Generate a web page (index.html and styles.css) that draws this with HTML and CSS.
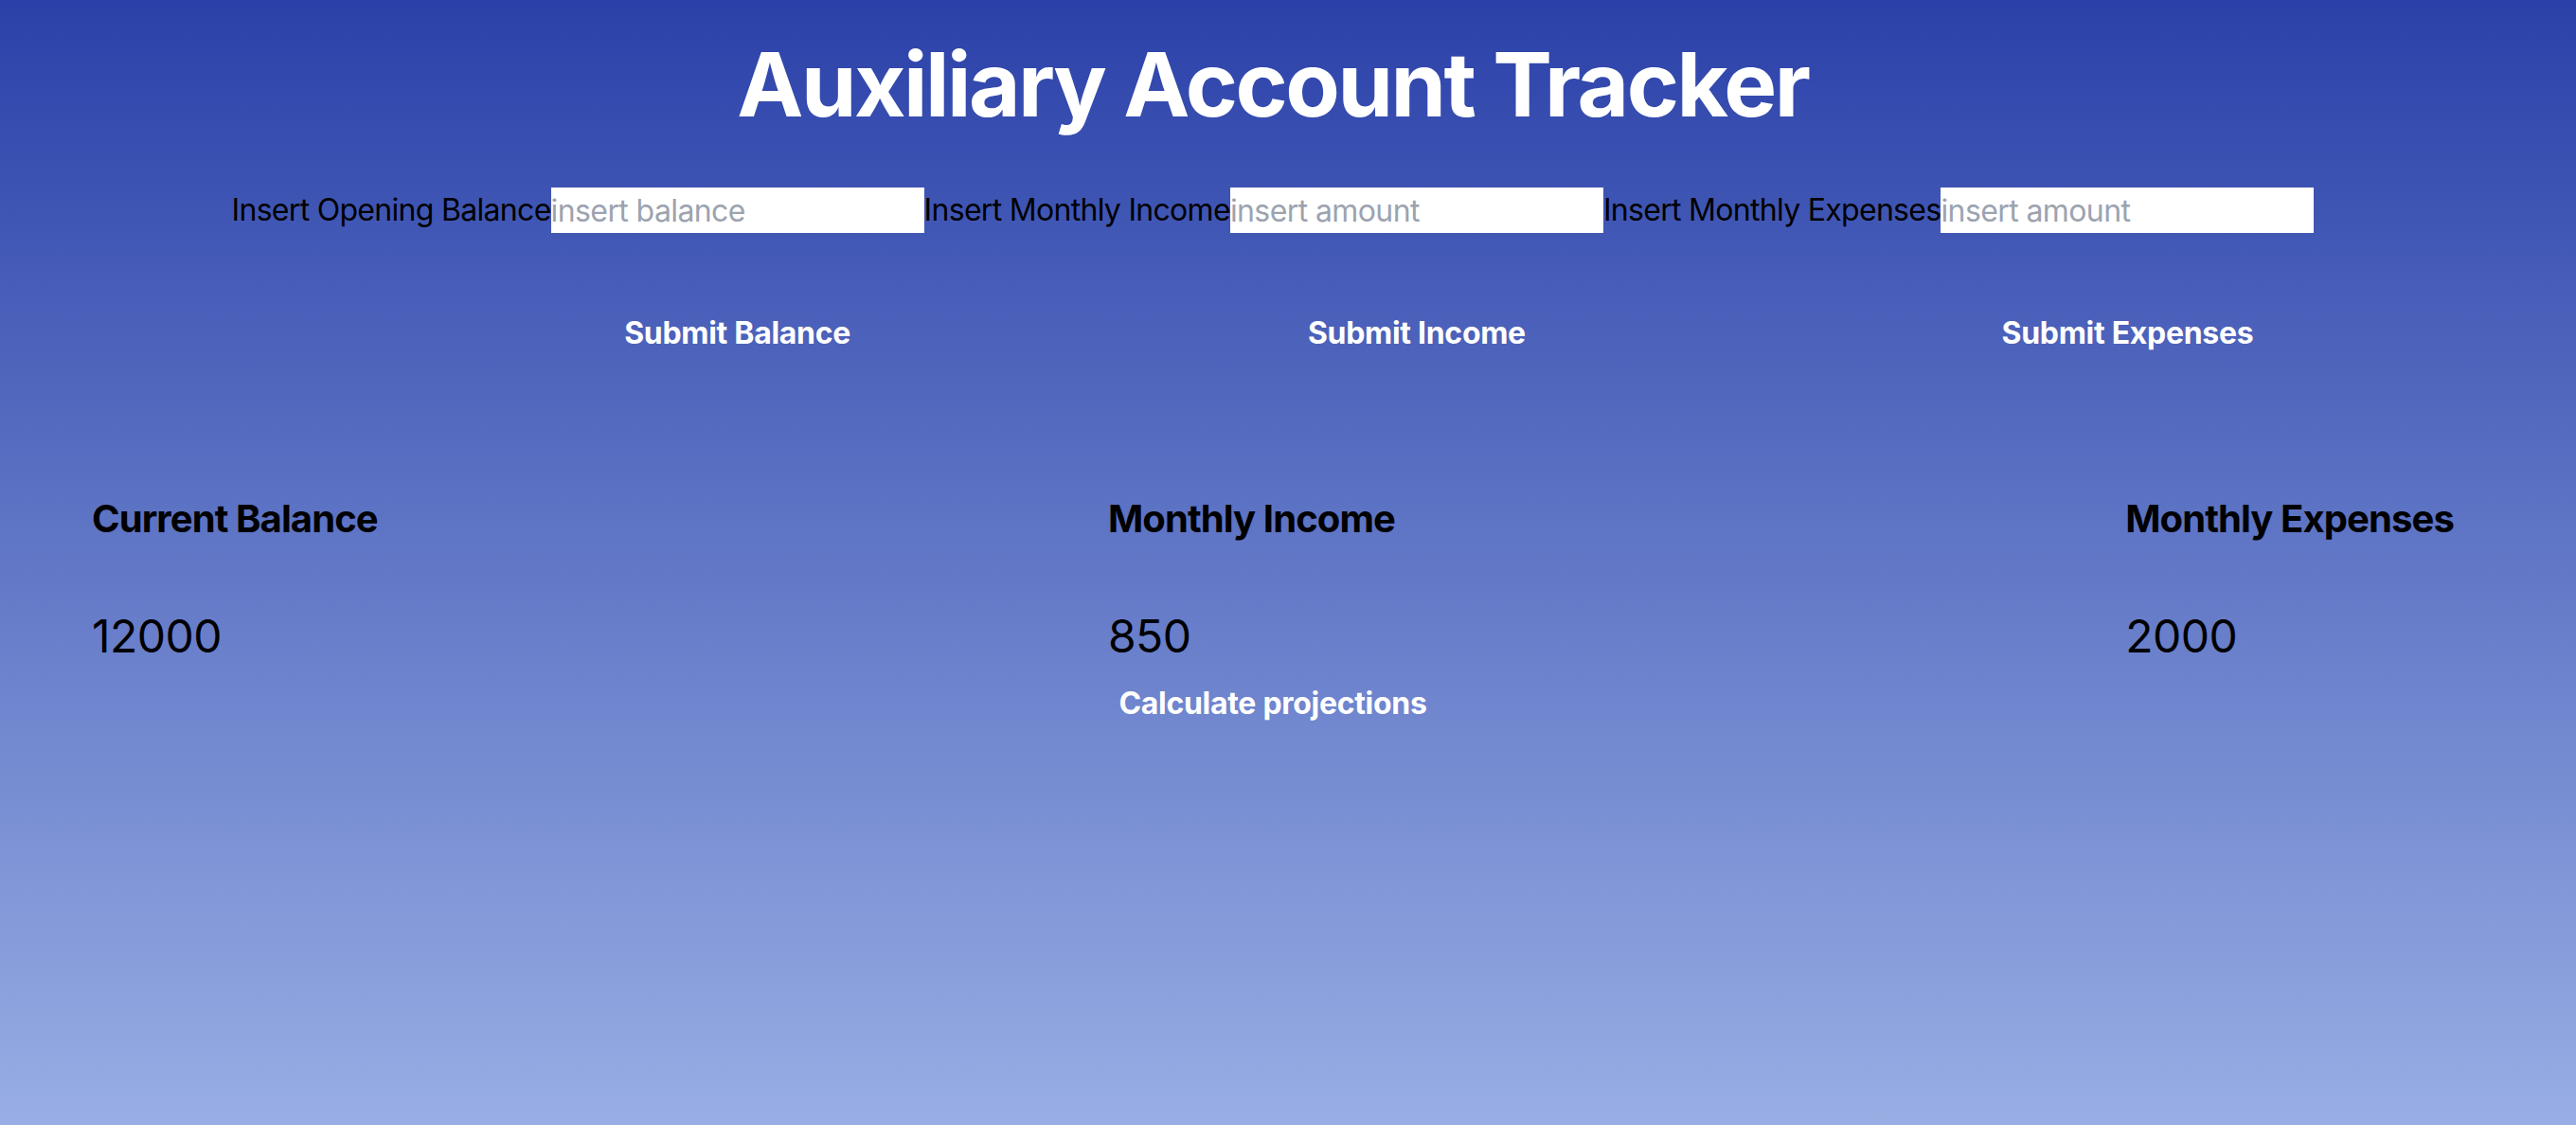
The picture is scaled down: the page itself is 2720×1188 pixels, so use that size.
FILE: index.html
```html
<!DOCTYPE html>
<html lang="en">
<head>
<meta charset="utf-8">
<title>Auxiliary Account Tracker</title>
<link rel="stylesheet" href="styles.css">
</head>
<body>
<div class="page">
  <h1 class="title">Auxiliary Account Tracker</h1>
  <div class="forms">
    <form class="entry">
      <label class="entry-label" for="bal">Insert Opening Balance</label>
      <div class="field">
        <input class="entry-input" id="bal" type="text" placeholder="insert balance">
        <button class="link-btn" type="button">Submit Balance</button>
      </div>
    </form>
    <form class="entry">
      <label class="entry-label" for="inc">Insert Monthly Income</label>
      <div class="field">
        <input class="entry-input" id="inc" type="text" placeholder="insert amount">
        <button class="link-btn" type="button">Submit Income</button>
      </div>
    </form>
    <form class="entry">
      <label class="entry-label" for="exp">Insert Monthly Expenses</label>
      <div class="field">
        <input class="entry-input" id="exp" type="text" placeholder="insert amount">
        <button class="link-btn" type="button">Submit Expenses</button>
      </div>
    </form>
  </div>
  <div class="stats">
    <div class="stat">
      <h2 class="stat-title">Current Balance</h2>
      <p class="stat-value">12000</p>
    </div>
    <div class="stat">
      <h2 class="stat-title">Monthly Income</h2>
      <p class="stat-value">850</p>
    </div>
    <div class="stat">
      <h2 class="stat-title">Monthly Expenses</h2>
      <p class="stat-value">2000</p>
    </div>
  </div>
  <div class="actions">
    <button class="link-btn calc-btn" type="button">Calculate projections</button>
  </div>
</div>
</body>
</html>
```
FILE: styles.css
```css
* { box-sizing: border-box; }
html, body { margin: 0; padding: 0; }
body {
  min-height: 1188px;
  background: linear-gradient(to bottom, #2b41a9 0%, #98aee4 100%);
  font-family: "Inter", "Noto Sans", sans-serif;
  color: #000;
}
.page {
  padding-right: 32px;
}
.title {
  margin: 42px 0 0;
  font-size: 94px;
  line-height: 1;
  font-weight: 700;
  color: #fff;
  text-align: center;
  letter-spacing: -2.5px;
}
.forms {
  display: flex;
  justify-content: center;
  margin-top: 62px;
}
.entry {
  display: flex;
  align-items: flex-start;
  margin: 0;
}
.entry-label {
  font-size: 32px;
  line-height: 48px;
  letter-spacing: -0.7px;
}
.field {
  display: flex;
  flex-direction: column;
  align-items: center;
}
.entry-input {
  width: 394px;
  height: 48px;
  border: none;
  outline: none;
  padding: 0;
  margin: 0;
  background: #fff;
  font-family: inherit;
  font-size: 32px;
  letter-spacing: -0.6px;
  color: #000;
}
.entry-input::placeholder { color: #9ca3af; }
.link-btn {
  background: none;
  border: none;
  padding: 0;
  margin: 82px 0 0;
  font-family: inherit;
  font-size: 32px;
  line-height: 48px;
  font-weight: 700;
  color: #fff;
  letter-spacing: -0.3px;
  cursor: pointer;
}
.stats {
  display: flex;
  justify-content: space-between;
  padding: 0 97px;
  margin-top: 142px;
}
.stat-title {
  margin: 0;
  font-size: 40px;
  line-height: 60px;
  font-weight: 700;
  letter-spacing: -0.9px;
}
.stat-value {
  margin: 58px 0 0;
  font-size: 48px;
  line-height: 72px;
  font-weight: 400;
  letter-spacing: -0.5px;
}
.actions {
  display: flex;
  justify-content: center;
}
.calc-btn {
  margin-top: 11px;
}
```
